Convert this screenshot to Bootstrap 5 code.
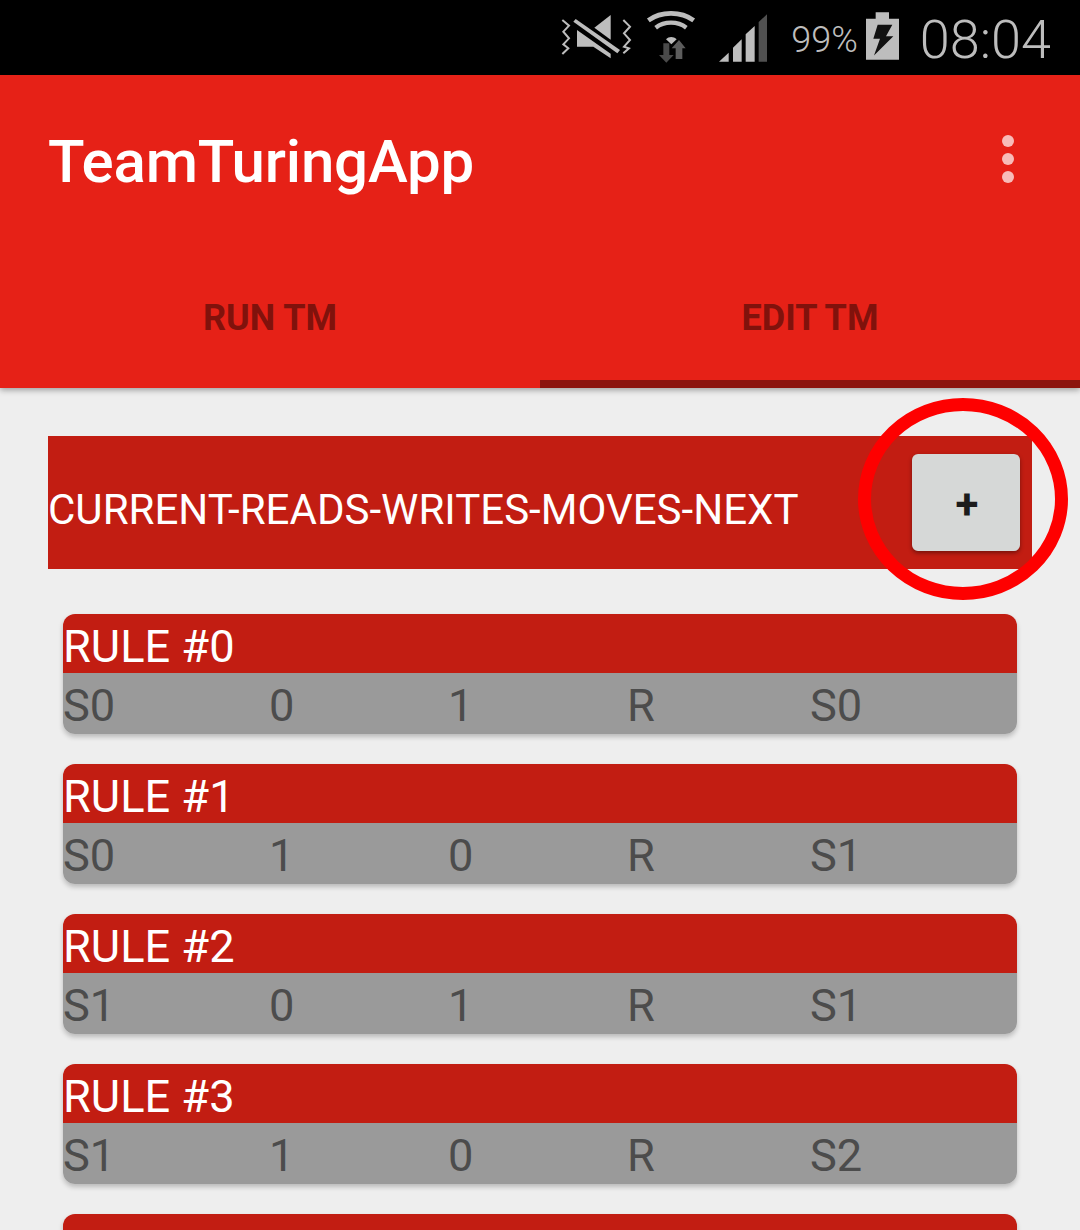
<!DOCTYPE html>
<html lang="en">
<head>
  <meta charset="UTF-8" />
  <meta name="viewport" content="width=device-width, initial-scale=1.0"/>
  <title>TeamTuringApp</title>
  <link href="https://cdn.jsdelivr.net/npm/bootstrap@5.3.2/dist/css/bootstrap.min.css" rel="stylesheet">
  <style>
    html, body { height: 1230px; overflow: hidden; }
    body { background: #eeeeee; font-family: Roboto, "Liberation Sans", sans-serif; position: relative; }

    .status-strip { height: 75px; background: #000; color: #bdbdbd; padding-right: 29px; }
    .status-pct { font-size: 36px; font-weight: 300; margin-left: 24px; margin-right: 8px; margin-top: 4px; }
    .status-time { font-size: 54px; font-weight: 300; margin-left: 21px; margin-top: 5px; line-height: 1; }
    .signal-icon { margin-left: 14px; }
    .battery-icon { margin-bottom: 3px; }

    .app-head { height: 313px; background: #e62117; box-shadow: 0 2px 6px rgba(0,0,0,.35); position: relative; }
    .app-bar { height: 173px; padding: 49px 48px 0; }
    .app-name { font-size: 60px; font-weight: 500; color: #fff; line-height: 76px; margin: 0; letter-spacing: -.2px; }
    .dots { gap: 6px; margin-top: 11px; margin-right: 18px; }
    .dots span { width: 12px; height: 12px; border-radius: 50%; background: #fff; opacity: .7; }
    .tab-row { height: 140px; }
    .tab-item { width: 540px; height: 140px; padding: 8px 0 0; font-size: 36px; font-weight: 700; color: #80120c; background: none; border: 0; border-bottom: 8px solid transparent; }
    .tab-item.picked { border-bottom-color: #8c140e; }

    .tab-body { padding: 48px 48px 0; }
    .rule-head { height: 133px; background: #c21d12; color: #fff; font-size: 42.05px; padding-right: 12px; }
    .rule-head .label-text { line-height: 1; margin-top: 15px; }
    .add-btn { width: 108px; height: 97px; background: #d6d8d7; border: 0; border-radius: 6px; box-shadow: 0 2px 4px rgba(0,0,0,.4); color: #1c1c1c; font-size: 42px; font-weight: 700; line-height: 1; padding: 5px 0 0 2px; }

    .rule-list { padding: 45px 15px 0; gap: 30px; }
    .rule-box { height: 120px; border-radius: 12px; overflow: hidden; box-shadow: 0 3px 5px rgba(0,0,0,.22); flex: none; }
    .rule-box.cut-off { height: 16px; background: #c21d12; border-radius: 12px 12px 0 0; }
    .rule-title { height: 59px; background: #c21d12; color: #fff; font-size: 45.2px; line-height: 65px; }
    .rule-cells { height: 61px; background: #9a9a9a; color: #4c4c4c; font-size: 45.2px; line-height: 65px; display: grid; grid-template-columns: 206px 179px 179px 183px 1fr; }

    .mark-ring { position: absolute; left: 858px; top: 398px; width: 211px; height: 202px; pointer-events: none; }
  </style>
</head>
<body>
  <!-- status bar -->
  <div class="status-strip d-flex align-items-center justify-content-end">
    <!-- mute + wifi, viewBox is 3x -->
    <svg width="150" height="65" viewBox="0 0 450 195">
      <path d="M22 45 42 62 25 80 42 100 25 118 40 130 22 147" fill="none" stroke="#bdbdbd" stroke-width="6"/>
      <path d="M205 45 225 65 207 85 225 105 207 125 222 130 205 145" fill="none" stroke="#bdbdbd" stroke-width="6"/>
      <path d="M118 68 167 30 167 104z" fill="#bdbdbd"/>
      <path d="M66 75 167 146 167 160 115 125 66 125z" fill="#bdbdbd"/>
      <path d="M55 50 62 42 195 135 187 145z" fill="#bdbdbd"/>
      <path d="M280 46C318 18 378 18 416 46" fill="none" stroke="#bdbdbd" stroke-width="14"/>
      <path d="M302 68C328 48 368 48 394 68" fill="none" stroke="#bdbdbd" stroke-width="13"/>
      <path d="M333 103C342 94 355 94 365 103L349 118z" fill="#bdbdbd"/>
      <path d="M325 115H343V150H356L334 173 312 150H325z" fill="#4a4a4a"/>
      <path d="M362 162V130H350L372 105 392 130H382V162z" fill="#5c5c5c"/>
    </svg>
    <svg class="signal-icon" width="48" height="48" viewBox="28 25 144 142">
      <path d="M28 167 57 140V167z" fill="#bdbdbd"/>
      <path d="M70 167V125L96 100V167z" fill="#bdbdbd"/>
      <path d="M108 167V85L135 60V167z" fill="#bdbdbd"/>
      <path d="M147 167V48L172 25V167z" fill="#505050"/>
    </svg>
    <span class="status-pct">99%</span>
    <svg class="battery-icon" width="33" height="48" viewBox="468 20 99 143">
      <path d="M468 40H497V20H537V40H567V163H468z" fill="#bdbdbd"/>
      <path d="M503 58H547L528 92H550L492 150 510 100H490z" fill="#111"/>
    </svg>
    <span class="status-time">08:04</span>
  </div>

  <!-- action bar and tabs -->
  <div class="app-head">
    <div class="app-bar d-flex justify-content-between align-items-start">
      <h1 class="app-name">TeamTuringApp</h1>
      <div class="dots d-flex flex-column"><span></span><span></span><span></span></div>
    </div>
    <div class="tab-row d-flex">
      <button class="tab-item" type="button">RUN TM</button>
      <button class="tab-item picked" type="button">EDIT TM</button>
    </div>
  </div>

  <div class="tab-body">
    <div class="rule-head d-flex align-items-center justify-content-between">
      <span class="label-text">CURRENT-READS-WRITES-MOVES-NEXT</span>
      <button class="add-btn" type="button">+</button>
    </div>

    <div class="rule-list d-flex flex-column" id="rule-list"></div>
  </div>

  <!-- hand-drawn red circle over the add button -->
  <svg class="mark-ring" viewBox="0 0 211 202">
    <ellipse cx="105" cy="101" rx="98.5" ry="94.5" fill="none" stroke="#fe0000" stroke-width="13"/>
  </svg>

  <script>
    const rules = [
      ['S0', '0', '1', 'R', 'S0'],
      ['S0', '1', '0', 'R', 'S1'],
      ['S1', '0', '1', 'R', 'S1'],
      ['S1', '1', '0', 'R', 'S2']
    ];
    const list = document.getElementById('rule-list');
    rules.forEach((r, i) => {
      list.innerHTML += `
        <div class="rule-box">
          <div class="rule-title">RULE #${i}</div>
          <div class="rule-cells">${r.map(c => `<span>${c}</span>`).join('')}</div>
        </div>`;
    });
    // next rule only just shows at the bottom of the screen
    list.innerHTML += '<div class="rule-box cut-off"></div>';
  </script>
  <script src="https://cdn.jsdelivr.net/npm/bootstrap@5.3.2/dist/js/bootstrap.bundle.min.js"></script>
</body>
</html>
